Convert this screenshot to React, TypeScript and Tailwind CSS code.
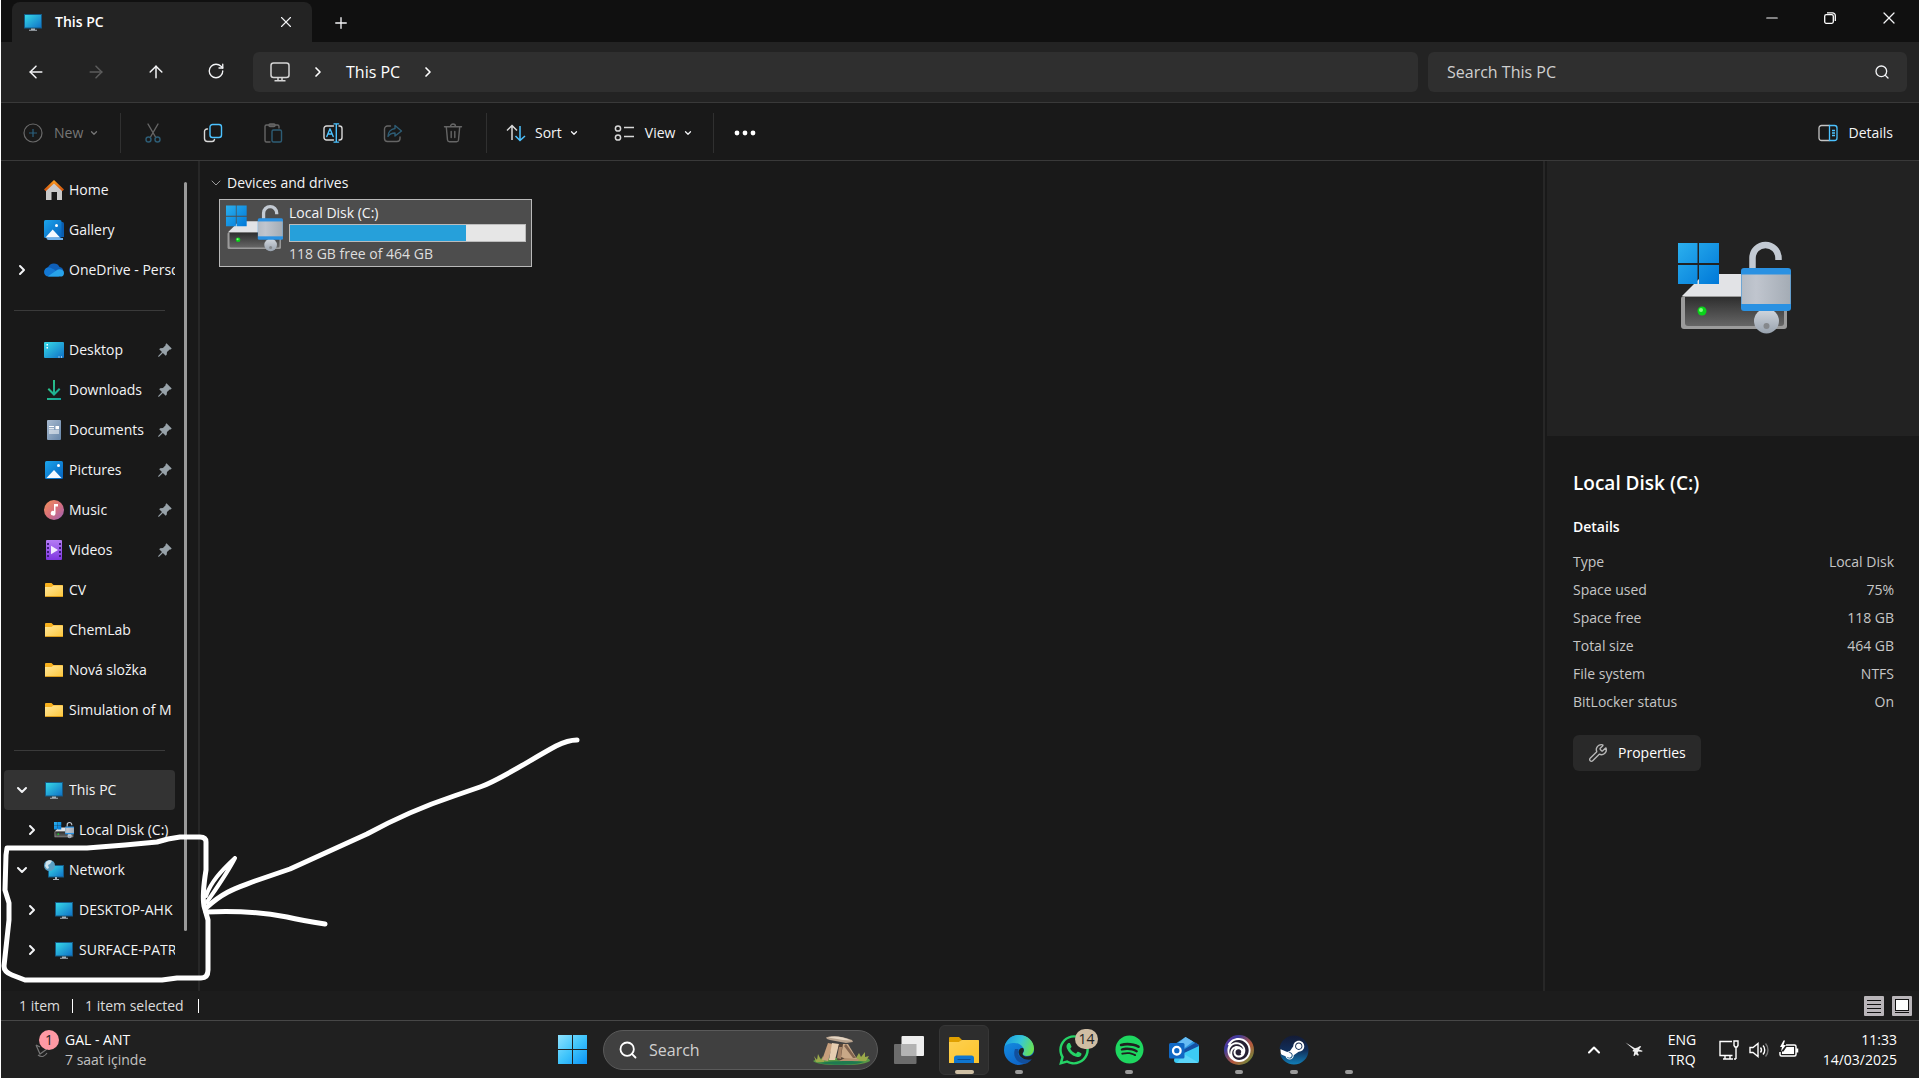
import clsx from "clsx";
import {
  ArrowLeft,
  ArrowRight,
  ArrowUp,
  ChevronDown,
  ChevronRight,
  ChevronUp,
  Minus,
  Plus,
  RotateCw,
  Search,
  Wrench,
  X,
} from "lucide-react";
import type { ReactNode } from "react";
import { FaSpotify, FaSteam, FaWhatsapp } from "react-icons/fa";
import { SiUbisoft } from "react-icons/si";

const ACCENT = "#4cc2ff";

/* Gradients shared by the icons below */
function IconDefs() {
  return (
    <svg className="absolute h-0 w-0" aria-hidden="true">
      <defs>
        <linearGradient id="screen" x1="0" y1="0" x2="1" y2="1">
          <stop offset="0" stopColor="#37dbe8" />
          <stop offset="1" stopColor="#0f6fc6" />
        </linearGradient>
        <linearGradient id="win" gradientUnits="userSpaceOnUse" x1="0" y1="2" x2="41" y2="43">
          <stop offset="0" stopColor="#2bb0ee" />
          <stop offset="1" stopColor="#0078d8" />
        </linearGradient>
        <linearGradient id="start" gradientUnits="userSpaceOnUse" x1="0" y1="0" x2="29" y2="29">
          <stop offset="0" stopColor="#8fe3ff" />
          <stop offset="0.5" stopColor="#3fc4fb" />
          <stop offset="1" stopColor="#0a93f8" />
        </linearGradient>
        <linearGradient id="front" x1="0" y1="0" x2="0" y2="1">
          <stop offset="0" stopColor="#2e2e2e" />
          <stop offset="1" stopColor="#666" />
        </linearGradient>
        <linearGradient id="metal" x1="0" y1="0" x2="1" y2="0">
          <stop offset="0" stopColor="#b4bbc4" />
          <stop offset="0.3" stopColor="#c0c5ce" />
          <stop offset="1" stopColor="#a4acb5" />
        </linearGradient>
        <linearGradient id="key" x1="0" y1="0" x2="0" y2="1">
          <stop offset="0" stopColor="#d3d8df" />
          <stop offset="1" stopColor="#98a2ae" />
        </linearGradient>
        <linearGradient id="folder" x1="0" y1="0" x2="1" y2="1">
          <stop offset="0" stopColor="#ffe79c" />
          <stop offset="1" stopColor="#fdc63a" />
        </linearGradient>
        <linearGradient id="photo" x1="0" y1="0" x2="1" y2="1">
          <stop offset="0" stopColor="#1ca5ec" />
          <stop offset="1" stopColor="#0561bd" />
        </linearGradient>
        <linearGradient id="music" x1="0" y1="0" x2="1" y2="1">
          <stop offset="0" stopColor="#f2925a" />
          <stop offset="0.5" stopColor="#d8707a" />
          <stop offset="1" stopColor="#9a5fb8" />
        </linearGradient>
        <linearGradient id="video" x1="0" y1="0" x2="0" y2="1">
          <stop offset="0" stopColor="#b47cf4" />
          <stop offset="1" stopColor="#7f35e0" />
        </linearGradient>
        <linearGradient id="roof" x1="0" y1="0" x2="0" y2="1">
          <stop offset="0" stopColor="#ffa21f" />
          <stop offset="1" stopColor="#cc4d0c" />
        </linearGradient>
        <linearGradient id="down" x1="0" y1="0" x2="1" y2="1">
          <stop offset="0" stopColor="#33c983" />
          <stop offset="1" stopColor="#12a09b" />
        </linearGradient>
        <linearGradient id="doc" x1="0" y1="0" x2="1" y2="1">
          <stop offset="0" stopColor="#a9bbd0" />
          <stop offset="1" stopColor="#6685a8" />
        </linearGradient>
        <linearGradient id="edgeTop" x1="0" y1="0.3" x2="1" y2="0.6">
          <stop offset="0" stopColor="#1b9de2" />
          <stop offset="0.5" stopColor="#36c6d8" />
          <stop offset="1" stopColor="#6be34e" />
        </linearGradient>
        <linearGradient id="edgeBody" x1="0" y1="0" x2="0.6" y2="1">
          <stop offset="0" stopColor="#1596e6" />
          <stop offset="1" stopColor="#0e62c6" />
        </linearGradient>
        <linearGradient id="ubi" x1="0" y1="0" x2="1" y2="1">
          <stop offset="0" stopColor="#8a2f8e" />
          <stop offset="0.25" stopColor="#3a3b9f" />
          <stop offset="0.6" stopColor="#b8593c" />
          <stop offset="1" stopColor="#4f9a3a" />
        </linearGradient>
        <linearGradient id="steam" x1="0" y1="0" x2="0" y2="1">
          <stop offset="0" stopColor="#141b35" />
          <stop offset="0.5" stopColor="#102d59" />
          <stop offset="1" stopColor="#127fb8" />
        </linearGradient>
      </defs>
    </svg>
  );
}

function MonitorIcon({ className = "h-5 w-5" }: { className?: string }) {
  return (
    <svg viewBox="0 0 20 20" className={className}>
      <rect x="1.5" y="2.5" width="17" height="13.5" fill="url(#screen)" stroke="#155a86" />
      <path d="M8 16.500h4v1.200h2v1.100H6v-1.100h2z" fill="#aab3ba" />
    </svg>
  );
}

function DriveIcon({ className }: { className: string }) {
  return (
    <svg viewBox="0 0 113 93" className={className}>
      <path d="M4 55 26 33H90l18 22z" fill="#e2e3e6" />
      <rect x="3" y="55" width="106" height="33" rx="3" fill="#9b9b9b" />
      <path d="M7 56h99v26a3 3 0 0 1-3 3H10a3 3 0 0 1-3-3z" fill="url(#front)" />
      <circle cx="24" cy="70" r="4.5" fill="#0ad31a" />
      <circle cx="23" cy="69" r="2" fill="#7dff7a" />
      <path d="M0 2h19.500v20H0zM21 2h20v20H21zM0 24h19.500v19H0zM21 24h20v19H21z" fill="url(#win)" />
      <path d="M74.500 28V17a13 13 0 0 1 26 0v2" fill="none" stroke="#c3cad3" strokeWidth="6.500" />
      <circle cx="88.500" cy="80" r="12.500" fill="url(#key)" />
      <circle cx="88.500" cy="85" r="3" fill="#85888c" />
      <rect x="63" y="27" width="50" height="43" rx="3" fill="#2a91e2" />
      <rect x="63.500" y="33.500" width="49" height="29.500" fill="url(#metal)" />
    </svg>
  );
}

function HomeIcon() {
  return (
    <svg viewBox="0 0 20 20" className="h-5 w-5">
      <path d="M2 9.500 10 2l8 7.500V20h-5v-8H7.500v8H2z" fill="#c9c9c9" />
      <path d="M0 9.500 10 0l10 9.500-1.700 1.700L10 3.600 1.700 11.200z" fill="url(#roof)" />
    </svg>
  );
}

function GalleryIcon() {
  return (
    <svg viewBox="0 0 20 20" className="h-5 w-5">
      <path d="M17 2h1.500A1.500 1.500 0 0 1 20 3.500V17h-3z" fill="#0a5cad" />
      <path d="M2.500 18H19v2H4.500a2 2 0 0 1-2-2z" fill="#6fb0ea" />
      <rect width="17.500" height="18" rx="1.500" fill="url(#photo)" />
      <circle cx="12.500" cy="5.500" r="1.500" fill="#fff" />
      <path d="m1.500 17.500 7.200-8 7.300 8z" fill="#f4f9ff" />
    </svg>
  );
}

function PicturesIcon() {
  return (
    <svg viewBox="0 0 20 20" className="h-5 w-5">
      <rect x="1" y="1" width="18" height="18" rx="1.500" fill="url(#photo)" />
      <circle cx="14.500" cy="5.500" r="1.500" fill="#fff" />
      <path d="m2.500 18 7.500-8 7.500 8z" fill="#f4f9ff" />
    </svg>
  );
}

function OneDriveIcon() {
  return (
    <svg viewBox="0 0 20 20" className="h-5 w-5">
      <path d="M4.500 16A4.500 4.500 0 0 1 4 7.300 6.500 6.500 0 0 1 15.600 7 4.600 4.600 0 0 1 16 16z" fill="#0f5fb8" />
      <path d="M4.500 16.500A4.500 4.500 0 0 1 4.600 7.500c3 0 5 2 7 3L15 16.500z" fill="#1378d4" />
      <path d="M4 16.300 13 10c2-1.500 7-.8 7 2.900A3.600 3.600 0 0 1 16.400 16.500H4.500z" fill="#28a3ea" />
    </svg>
  );
}

function DesktopIcon() {
  return (
    <svg viewBox="0 0 20 20" className="h-5 w-5">
      <rect y="2" width="20" height="16" rx="1" fill="url(#screen)" />
      <path d="M2.500 4h1.500v1.500H2.500zM2.500 7h1.500v1.500H2.500zM14.500 16.500h1v1h-1zM17 16.500h1v1h-1z" fill="#fff" />
    </svg>
  );
}

function DownloadsIcon() {
  return (
    <svg viewBox="0 0 20 20" className="h-5 w-5">
      <path d="M9 0h2v12l4-4 1.400 1.400L10 16 3.600 9.400 5 8l4 4zM3 18h14v2H3z" fill="url(#down)" />
    </svg>
  );
}

function DocumentsIcon() {
  return (
    <svg viewBox="0 0 20 20" className="h-5 w-5">
      <rect x="3" width="14" height="20" rx="1" fill="url(#doc)" />
      <path d="M5 6h5v1H5zM5 8.200h5v1H5zM11.500 6H15v3.200h-3.500zM5 10.400h10v1H5zM5 12.600h10v1H5z" fill="#fff" />
    </svg>
  );
}

function MusicIcon() {
  return (
    <svg viewBox="0 0 20 20" className="h-5 w-5">
      <circle cx="10" cy="10" r="10" fill="url(#music)" />
      <path d="M10 4h4v2.500h-2.500V13A2.400 2.400 0 1 1 10 11z" fill="#fff" />
    </svg>
  );
}

function VideosIcon() {
  return (
    <svg viewBox="0 0 20 20" className="h-5 w-5">
      <rect x="2" width="16" height="20" rx="1" fill="url(#video)" />
      <path
        d="M3 3h2v2H3zM3 7h2v2H3zM3 11h2v2H3zM3 15h2v2H3zM15 3h2v2h-2zM15 7h2v2h-2zM15 11h2v2h-2zM15 15h2v2h-2z"
        fill="#3f1a7d"
      />
      <path d="m7 5.800 7 4.200-7 4.200z" fill="#f3eaff" />
    </svg>
  );
}

function FolderIcon() {
  return (
    <svg viewBox="0 0 20 20" className="h-5 w-5">
      <path d="M1 4a1 1 0 0 1 1-1h5.500l2 2H18a1 1 0 0 1 1 1v3H1z" fill="#f8b01c" />
      <path d="M1 7h6.500l2-1.500H19V16a1 1 0 0 1-1 1H2a1 1 0 0 1-1-1z" fill="url(#folder)" />
      <path d="M1 16h18a1 1 0 0 1-1 1H2a1 1 0 0 1-1-1z" fill="#d99a1a" />
    </svg>
  );
}

function NetworkIcon() {
  return (
    <svg viewBox="0 0 20 20" className="h-5 w-5">
      <rect x="4.500" y="5.500" width="15" height="11.500" fill="url(#screen)" stroke="#155a86" />
      <path d="M11 17h2v2h2v1H9v-1h2z" fill="#aab3ba" />
      <circle cx="5.500" cy="5.500" r="5.500" fill="#5a9fc4" />
      <path d="M2 2c2-2 5-2 6-1L6 4 4 5 5 8 3 9 1 6z" fill="#cfe3ee" />
    </svg>
  );
}

function PinIcon() {
  return (
    <svg viewBox="0 0 14 14" className="h-3.5 w-3.5">
      <path d="m8.500.3 5.200 5.200-1 1-1-.1L9 9.100l-.3 2.700-1 1-2.800-2.800L1 13.800H.2V13L4 9.100 1.200 6.300l1-1L5 5l2.600-2.700V1.200z" fill="#98a2a9" />
    </svg>
  );
}

type Place = {
  label: string;
  icon: ReactNode;
  pinned?: boolean;
  arrow?: "right" | "down";
  child?: boolean;
  active?: boolean;
};

const GROUPS: Place[][] = [
  [
    { label: "Home", icon: <HomeIcon /> },
    { label: "Gallery", icon: <GalleryIcon /> },
    { label: "OneDrive - Perso", icon: <OneDriveIcon />, arrow: "right" },
  ],
  [
    { label: "Desktop", icon: <DesktopIcon />, pinned: true },
    { label: "Downloads", icon: <DownloadsIcon />, pinned: true },
    { label: "Documents", icon: <DocumentsIcon />, pinned: true },
    { label: "Pictures", icon: <PicturesIcon />, pinned: true },
    { label: "Music", icon: <MusicIcon />, pinned: true },
    { label: "Videos", icon: <VideosIcon />, pinned: true },
    { label: "CV", icon: <FolderIcon /> },
    { label: "ChemLab", icon: <FolderIcon /> },
    { label: "Nová složka", icon: <FolderIcon /> },
    { label: "Simulation of M", icon: <FolderIcon /> },
  ],
  [
    { label: "This PC", icon: <MonitorIcon />, arrow: "down", active: true },
    { label: "Local Disk (C:)", icon: <DriveIcon className="h-5 w-5" />, arrow: "right", child: true },
    { label: "Network", icon: <NetworkIcon />, arrow: "down" },
    { label: "DESKTOP-AHK", icon: <MonitorIcon />, arrow: "right", child: true },
    { label: "SURFACE-PATR", icon: <MonitorIcon />, arrow: "right", child: true },
  ],
];

const DETAILS = [
  ["Type", "Local Disk"],
  ["Space used", "75%"],
  ["Space free", "118 GB"],
  ["Total size", "464 GB"],
  ["File system", "NTFS"],
  ["BitLocker status", "On"],
];

function PlaceRow({ place }: { place: Place }) {
  const Arrow = place.arrow === "down" ? ChevronDown : ChevronRight;

  return (
    <li>
      <button
        type="button"
        className={clsx(
          "flex h-10 w-full items-center rounded-sm text-left whitespace-nowrap",
          place.child ? "pl-5" : "pl-2.5",
          place.active && "bg-[#333]",
        )}
      >
        <span className="flex w-[30px] shrink-0">
          {place.arrow ? <Arrow className="h-4 w-4" strokeWidth={3} /> : null}
        </span>
        <span className="shrink-0">{place.icon}</span>
        <span className="ml-[5px] flex-1 overflow-hidden">{place.label}</span>
        {place.pinned ? (
          <span className="mr-[3px]">
            <PinIcon />
          </span>
        ) : null}
      </button>
    </li>
  );
}

function Sidebar() {
  return (
    <aside className="flex w-[199px] shrink-0 border-r-2 border-[#272727]">
      <nav className="w-[174px] shrink-0 overflow-hidden pt-[9px] pl-[3px]" aria-label="Places">
        {GROUPS.map((group, index) => (
          <div key={index}>
            {index > 0 ? (
              <div className="flex h-10 items-center pr-2.5 pl-2.5">
                <hr className="w-full border-[#3a3a3a]" />
              </div>
            ) : null}
            <ul>
              {group.map((place) => (
                <PlaceRow key={place.label} place={place} />
              ))}
            </ul>
          </div>
        ))}
      </nav>
      <div className="mt-[21px] mb-[60px] ml-[9px] w-[3px] rounded-full bg-[#9a9a9a]" />
    </aside>
  );
}

function TitleBar() {
  return (
    <header className="flex h-[42px] justify-between bg-[#101010]">
      <div className="flex items-end">
        <div className="ml-[11px] flex h-10 w-[300px] items-center rounded-t-lg bg-[#232323] pl-[11px]">
          <MonitorIcon className="h-5 w-5" />
          <span className="ml-3 flex-1 text-sm font-semibold text-white">This PC</span>
          <button type="button" aria-label="Close tab" className="mr-[17px]">
            <X className="h-[18px] w-[18px]" strokeWidth={1.5} />
          </button>
        </div>
        <button type="button" aria-label="New tab" className="ml-5 flex h-[38px] items-center">
          <Plus className="h-[18px] w-[18px]" strokeWidth={1.8} />
        </button>
      </div>
      <div className="flex h-9 items-center">
        <button type="button" aria-label="Minimize" className="flex w-[58px] justify-center">
          <Minus className="h-[18px] w-[18px]" strokeWidth={1.5} />
        </button>
        <button type="button" aria-label="Restore" className="flex w-[58px] justify-center">
          <svg viewBox="0 0 12 12" className="h-3 w-3" fill="none" stroke="#fff" strokeWidth="1.3">
            <rect x="0.700" y="2.700" width="8.600" height="8.600" rx="1.500" />
            <path d="M3 .8h5.500a2.800 2.800 0 0 1 2.800 2.800V9" />
          </svg>
        </button>
        <button type="button" aria-label="Close" className="flex w-[60px] justify-center">
          <X className="h-5 w-5" strokeWidth={1.5} />
        </button>
      </div>
    </header>
  );
}

function NavBar() {
  return (
    <div className="flex h-[61px] items-center border-b border-[#393939] bg-[#232323] pr-3 pl-[5px]">
      <div className="flex text-gray-100">
        <button type="button" aria-label="Back" className="flex w-[60px] justify-center">
          <ArrowLeft className="h-5 w-5" strokeWidth={1.8} />
        </button>
        <button type="button" aria-label="Forward" disabled className="flex w-[60px] justify-center text-[#5c5c5c]">
          <ArrowRight className="h-5 w-5" strokeWidth={1.8} />
        </button>
        <button type="button" aria-label="Up" className="flex w-[60px] justify-center">
          <ArrowUp className="h-5 w-5" strokeWidth={1.8} />
        </button>
        <button type="button" aria-label="Refresh" className="flex w-[60px] justify-center">
          <RotateCw className="h-[18px] w-[18px]" strokeWidth={1.8} />
        </button>
      </div>
      <div className="ml-[7px] flex h-10 flex-1 items-center rounded-md bg-[#2f2f2f] pl-[17px] text-white">
        <svg viewBox="0 0 20 20" className="h-5 w-5" fill="none" stroke="#d6d6d6" strokeWidth="1.5">
          <rect x="1" y="1" width="18" height="14.500" rx="2.500" />
          <path d="M8 15.500V18.500M12 15.500V18.500M4.500 18.700h11" />
        </svg>
        <ChevronRight className="ml-5 h-4 w-4" strokeWidth={2.5} />
        <span className="ml-5 text-base">This PC</span>
        <ChevronRight className="ml-5 h-4 w-4" strokeWidth={2.5} />
      </div>
      <label className="ml-2.5 flex h-10 w-[479px] items-center rounded-md bg-[#2f2f2f] pr-[17px] pl-[19px]">
        <input
          type="text"
          aria-label="Search This PC"
          placeholder="Search This PC"
          className="min-w-0 flex-1 bg-transparent text-base outline-none placeholder:text-[#cfcfcf]"
        />
        <Search className="h-4 w-4" strokeWidth={2} />
      </label>
    </div>
  );
}

function ToolButton({ label, children, disabled }: { label: string; children: ReactNode; disabled?: boolean }) {
  return (
    <button type="button" aria-label={label} disabled={disabled} className="flex w-[60px] justify-center">
      <svg
        viewBox="0 0 20 20"
        className={clsx("h-5 w-5", disabled && "opacity-40")}
        fill="none"
        stroke="#d8d8d8"
        strokeWidth="1.4"
        strokeLinecap="round"
        strokeLinejoin="round"
      >
        {children}
      </svg>
    </button>
  );
}

function ToolBar() {
  return (
    <div className="flex h-[58px] items-center justify-between border-b border-[#393939] pt-0.5 pr-[26px] pl-[22px]">
      <div className="flex items-center">
        <button type="button" disabled className="flex w-[97px] items-center text-[#767676]">
          <svg viewBox="0 0 20 20" className="h-5 w-5" fill="none" stroke="#6a6a6a" strokeWidth="1.2">
            <circle cx="10" cy="10" r="9" />
            <path d="M10 6v8M6 10h8" stroke="#2b617f" />
          </svg>
          <span className="ml-[11px]">New</span>
          <ChevronDown className="ml-1.5 h-2.5 w-2.5" strokeWidth={3} />
        </button>
        <span className="h-10 w-px bg-[#303030]" />
        <div className="ml-0.5 flex">
          <ToolButton label="Cut" disabled>
            <path d="M5 1l7.500 13M15 1 7.500 14" />
            <circle cx="5.500" cy="16.500" r="2.500" stroke={ACCENT} />
            <circle cx="14.500" cy="16.500" r="2.500" stroke={ACCENT} />
          </ToolButton>
          <ToolButton label="Copy">
            <path d="M4.500 6H4a2.500 2.500 0 0 0-2.500 2.500v7A3 3 0 0 0 4.500 18.500H9a2.500 2.500 0 0 0 2.500-2" />
            <rect x="7" y="1.500" width="11.500" height="13" rx="2.500" stroke={ACCENT} />
          </ToolButton>
          <ToolButton label="Paste" disabled>
            <path d="M7 19H3.500A1.500 1.500 0 0 1 2 17.500v-14A1.500 1.500 0 0 1 3.500 2h11A1.500 1.500 0 0 1 16 3.500V5" />
            <rect x="6" y="1" width="6" height="2.500" rx="1" />
            <rect x="9" y="7" width="9.500" height="12" rx="1.500" stroke={ACCENT} />
          </ToolButton>
          <ToolButton label="Rename">
            <path d="M10.500 3H3.500a2.500 2.500 0 0 0-2.500 2.500v9A2.500 2.500 0 0 0 3.500 17h7M16 3h.5A2.500 2.500 0 0 1 19 5.500v9a2.500 2.500 0 0 1-2.500 2.500H16" />
            <path d="M3.800 13.500 7 5.800l3.200 7.700M5 11h4M13.300 1v18M11 .9h4.600M11 19.100h4.600" stroke={ACCENT} />
          </ToolButton>
          <ToolButton label="Share" disabled>
            <path d="M7.500 3H4.500A3 3 0 0 0 1.500 6v9.500a3 3 0 0 0 3 3H14a3 3 0 0 0 3-3V14" />
            <path d="M12 2.500 18.500 8 12 13v-3c-3.500 0-5.500 1-7 3.500C5 9 8 6 12 5.500z" stroke={ACCENT} />
          </ToolButton>
          <ToolButton label="Delete" disabled>
            <path d="M1.500 3.800h17M7.500 3.500a2.500 2.500 0 0 1 5 0M3.300 4l1.200 13a2 2 0 0 0 2 1.800h7a2 2 0 0 0 2-1.800l1.200-13M8.200 8.500v6M11.800 8.500v6" />
          </ToolButton>
        </div>
        <span className="ml-[3px] h-10 w-px bg-[#303030]" />
        <button type="button" className="ml-[19px] flex items-center">
          <svg viewBox="0 0 20 20" className="h-5 w-5" fill="none" stroke="#d8d8d8" strokeWidth="1.5">
            <path d="M6 17V2.500M1 7.500l5-5 5 5" />
            <path d="M14 3v14.500M9.500 13l4.500 4.500 5-4.500" stroke={ACCENT} />
          </svg>
          <span className="ml-[9px]">Sort</span>
          <ChevronDown className="ml-[7px] h-2.5 w-2.5" strokeWidth={3} />
        </button>
        <button type="button" className="ml-[35px] flex items-center">
          <svg viewBox="0 0 20 20" className="h-5 w-5" fill="none" stroke="#d8d8d8" strokeWidth="1.5">
            <circle cx="4" cy="5.500" r="2.600" />
            <circle cx="4" cy="14.500" r="2.600" />
            <path d="M10 4.500h10M10 13.500h10" />
          </svg>
          <span className="ml-[11px]">View</span>
          <ChevronDown className="ml-2 h-2.5 w-2.5" strokeWidth={3} />
        </button>
        <span className="ml-5 h-10 w-px bg-[#303030]" />
        <button type="button" aria-label="See more" className="ml-5 flex">
          <svg viewBox="0 0 22 6" className="h-1.5 w-[22px]" fill="#fff">
            <circle cx="3" cy="3" r="2.400" />
            <circle cx="11" cy="3" r="2.400" />
            <circle cx="19" cy="3" r="2.400" />
          </svg>
        </button>
      </div>
      <button type="button" className="flex items-center">
        <svg viewBox="0 0 20 20" className="h-5 w-5" fill="none" stroke="#c4c4c4" strokeWidth="1.3">
          <path d="M11.500 2.500H3.500a2.500 2.500 0 0 0-2.500 2.500v10a2.500 2.500 0 0 0 2.500 2.500h8" />
          <path d="M11.500 2.500h5A2.500 2.500 0 0 1 19 5v10a2.500 2.500 0 0 1-2.500 2.500h-5zM14 7.500h3M14 10h3M14 12.500h3" stroke={ACCENT} />
        </svg>
        <span className="ml-2.5">Details</span>
      </button>
    </div>
  );
}

function DriveList() {
  return (
    <main className="min-w-0 flex-1 pt-3 pl-2">
      <button type="button" className="flex h-5 items-center">
        <ChevronDown className="h-4 w-4 text-[#9a9a9a]" strokeWidth={1.5} />
        <span className="ml-[3px]">Devices and drives</span>
      </button>
      <button
        type="button"
        className="mt-[6px] ml-[11px] flex h-[68px] w-[313px] border border-[#b9b9b9] bg-[#4d4d4d] pt-1 pr-[5px] pl-1.5 text-left"
      >
        <DriveIcon className="h-[48px] w-[57px] shrink-0" />
        <span className="ml-1.5 flex flex-1 flex-col">
          <span className="leading-[18px]">Local Disk (C:)</span>
          <span className="mt-[2px] flex h-[18px] border border-[#bcbcbc] bg-[#e6e6e6]">
            <span className="w-3/4 bg-[#26a0da]" />
          </span>
          <span className="mt-[3px] leading-[18px] text-[#dedede]">118 GB free of 464 GB</span>
        </span>
      </button>
    </main>
  );
}

function DetailsPane() {
  return (
    <aside className="w-[376px] shrink-0 border-l-2 border-[#272727]">
      <div className="ml-0.5 flex h-[275px] justify-center bg-[#222] pt-20 pl-0.5">
        <DriveIcon className="h-[93px] w-[113px]" />
      </div>
      <div className="pt-8 pr-[25px] pl-7">
        <h2 className="text-[19px] leading-[30px] font-semibold text-white">Local Disk (C:)</h2>
        <h3 className="mt-[19px] leading-5 font-semibold text-white">Details</h3>
        <dl className="mt-[11px] text-[#c6c6c6]">
          {DETAILS.map(([name, value]) => (
            <div key={name} className="flex justify-between leading-7">
              <dt>{name}</dt>
              <dd>{value}</dd>
            </div>
          ))}
        </dl>
        <button type="button" className="mt-[19px] flex h-9 items-center rounded-md bg-[#292929] px-[15px] text-white">
          <Wrench className="h-5 w-5 text-[#b8b8b8]" strokeWidth={1.6} />
          <span className="ml-2.5">Properties</span>
        </button>
      </div>
    </aside>
  );
}

function StatusBar() {
  return (
    <footer className="flex h-[30px] items-center justify-between border-b border-[#474747] bg-[#1c1c1c] pr-[7px] pl-[18px] text-[#dcdcdc]">
      <div className="flex items-center">
        <span>1 item</span>
        <span className="ml-3 h-3.5 w-px bg-white" />
        <span className="ml-3">1 item selected</span>
        <span className="ml-3.5 h-3.5 w-px bg-white" />
      </div>
      <div className="flex gap-2">
        <button type="button" aria-label="Details view">
          <svg viewBox="0 0 20 20" className="h-5 w-5">
            <rect width="20" height="20" rx="1" fill="#b9b5b9" />
            <path d="M3 4.500h14M3 8.500h14M3 12.500h14M3 16.500h14" stroke="#111" />
          </svg>
        </button>
        <button type="button" aria-label="Large icons view">
          <svg viewBox="0 0 20 20" className="h-5 w-5">
            <rect width="20" height="20" rx="1" fill="#b9b5b9" />
            <rect x="3.500" y="3.500" width="13" height="11" fill="#fff" stroke="#111" />
            <path d="M3 16.500h14" stroke="#111" />
          </svg>
        </button>
      </div>
    </footer>
  );
}

/* Stones on grass, shown at the end of the search pill */
function DolmenArt() {
  return (
    <svg viewBox="0 0 57 30" className="h-[30px] w-[57px]">
      <path d="M0 26c5-3 12-3 20-3h30c5 0 7 1 7 3-6 4-18 4-28 4S4 30 0 26z" fill="#5a9a45" />
      <path d="M1 21l3 4 1-6 3 6 2-4 1 6H3zM43 23l3-5 2 4 4-5v5l4-1-3 5H43z" fill="#9aa94a" />
      <path d="M15 8 9 25l6 1 5-17z" fill="#c79f7d" />
      <path d="M19 8 16 25h6l4-16z" fill="#e6cdb0" />
      <path d="M26 9 24 25l10 1-4-17z" fill="#594537" />
      <path d="M30 9 28 22l8 3 8-1-9-15z" fill="#c9a887" />
      <path d="M33 9l10 14h-3L31 11z" fill="#80634e" />
      <path d="M26 12l-2 11 4 1 1-12z" fill="#a98568" />
      <path d="M13 2.500C18 0 30 1 39 5l1 2-7 1-16-3-3-1z" fill="#b9a48f" />
      <path d="M15 2.500c7-2 15-.5 23 3l-8-.5z" fill="#e4d5c3" />
      <path d="M26 26l6-3 14 1-1 2-14 2z" fill="#b3906f" />
      <path d="M5 28c10-2 35-3 46-1-8 3-30 4-46 1z" fill="#1f7a50" />
    </svg>
  );
}

function EdgeIcon() {
  return (
    <svg viewBox="0 0 30 30" className="h-[30px] w-[30px]">
      <circle cx="15" cy="15" r="15" fill="url(#edgeBody)" />
      <path d="M.5 12C2 4.500 8 0 15 0c8.500 0 15 6 15 13.500C30 18 27 21 23 21c-3 0-5-1.500-4-3 1-1.300 1-2 .8-3.500C19 11 15 8 10.500 8 6 8 2 9 .5 12z" fill="url(#edgeTop)" />
      <path d="M11 14c-3 8 3 15 10 14.700 3-.2 6-3 7.500-6-3 2-7 2-10 .8-4-1.500-5.500-5.500-4-9.500z" fill="#124f9c" />
      <path d="M19.500 13.500c.8 2 .3 3-.7 4.500-1 1.700 1 3.500 4.200 3.500 3 0 5-1 7-4l.5 3.500-2 3C24 26 15 24 14.500 17c0-3 3-5 5-3.500z" fill="#202020" />
    </svg>
  );
}

function OutlookIcon() {
  return (
    <svg viewBox="0 0 30 28" className="h-7 w-[30px]">
      <path d="M6 8 16.500 1 30 9v3L14 22H6z" fill="#2a93df" />
      <path d="M8 8 16.500 1 24 5.500 13 14z" fill="#67bdf4" />
      <path d="M14 14 27 6.500l3 3V13L15 22z" fill="#1450a3" />
      <path d="M6 20l9-3 15-7v15a2 2 0 0 1-2 2H8a3 3 0 0 1-3-3z" fill="#3ccbf4" />
      <path d="M15 18 30 27H8z" fill="#6fdcfb" opacity="0.6" />
      <rect y="7" width="15.500" height="15.500" rx="1.500" fill="#1068c4" />
      <circle cx="7.800" cy="14.700" r="3.800" fill="none" stroke="#fff" strokeWidth="2.300" />
    </svg>
  );
}

function TaskItem({ label, active, running, children }: {
  label: string;
  active?: boolean;
  running?: boolean;
  children?: ReactNode;
}) {
  return (
    <button
      type="button"
      aria-label={label}
      className={clsx(
        "flex h-[50px] w-[50px] flex-col items-center rounded-md",
        active && "border border-[#363636] bg-[#2d2d2d]",
      )}
    >
      <span className={clsx("relative flex h-[30px] items-center", active ? "mt-[9px]" : "mt-2.5")}>{children}</span>
      {active || running ? (
        <span className={clsx("mt-[5px] h-1 rounded-full", active ? "w-[19px] bg-[#cfc0a5]" : "w-2 bg-[#9b9b9b]")} />
      ) : null}
    </button>
  );
}

function Taskbar() {
  return (
    <div className="flex h-[57px] items-center bg-[#202020] text-white">
      <button type="button" className="flex flex-1 items-center pl-[34px] text-left">
        <span className="relative h-10 w-[30px]">
          <svg viewBox="0 0 30 36" className="h-9 w-[30px]">
            <path d="M1 15l4 9 7-5M3 25c4 3 7 1 9-2M1 15l4 2" fill="none" stroke="#777" strokeWidth="1.200" />
          </svg>
          <span className="absolute top-0 left-1 flex h-5 w-5 items-center justify-center rounded-full bg-[#ff99a4] text-sm text-[#222]">
            1
          </span>
        </span>
        <span className="flex flex-col">
          <span className="leading-5">GAL - ANT</span>
          <span className="leading-5 text-[#c2c2c2]">7 saat içinde</span>
        </span>
      </button>

      <div className="flex items-center gap-[5px]">
        <button type="button" aria-label="Start" className="mr-[11px]">
          <svg viewBox="0 0 29 29" className="h-[29px] w-[29px]">
            <path d="M0 0h14v14H0zM15 0h14v14H15zM0 15h14v14H0zM15 15h14v14H15z" fill="url(#start)" />
          </svg>
        </button>
        <label className="mr-px flex h-10 w-[275px] items-center rounded-full border border-[#5a5a5a] bg-[#404040] pr-[7px] pl-3.5">
          <Search className="h-5 w-5" strokeWidth={2.2} />
          <input
            type="text"
            aria-label="Search"
            placeholder="Search"
            className="ml-[11px] w-0 flex-1 bg-transparent text-base outline-none placeholder:text-[#d0d0d0]"
          />
          <DolmenArt />
        </label>
        <TaskItem label="Task view">
          <svg viewBox="0 0 30 28" className="h-7 w-[30px]">
            <rect y="8" width="22.500" height="20" rx="1" fill="#6c6c6c" />
            <rect x="7.500" width="22.500" height="20" rx="1" fill="#eee" />
            <path d="M7.500 8h15v12h-15z" fill="#b3b3b3" />
          </svg>
        </TaskItem>
        <TaskItem label="File Explorer" active>
          <svg viewBox="0 0 30 28" className="h-7 w-[30px]">
            <path d="M0 2a1 1 0 0 1 1-1h9l3 3-3 3H0z" fill="#e0a000" />
            <path d="M0 6h10l3-2h16a1 1 0 0 1 1 1v22H0z" fill="url(#folder)" />
            <path d="M0 6h10l3-2h16a1 1 0 0 1 1 1v22H0z" fill="#fcc21f" opacity="0.600" />
            <path d="M5 27v-5a2.500 2.500 0 0 1 2.500-2.500h15A2.500 2.500 0 0 1 25 22v5z" fill="#0f76cf" />
            <path d="M8.500 23.500h13" stroke="#0a4d92" />
          </svg>
        </TaskItem>
        <TaskItem label="Edge" running>
          <EdgeIcon />
        </TaskItem>
        <TaskItem label="WhatsApp">
          <FaWhatsapp className="h-[34px] w-[34px] text-[#25d366]" />
          <span className="absolute -top-1.5 left-[18px] flex h-5 w-[23px] items-center justify-center rounded-full bg-[#cfbda3] text-sm text-[#222]">
            14
          </span>
        </TaskItem>
        <TaskItem label="Spotify" running>
          <FaSpotify className="h-[29px] w-[29px] text-[#1ed760]" />
        </TaskItem>
        <TaskItem label="Outlook">
          <OutlookIcon />
        </TaskItem>
        <TaskItem label="Ubisoft Connect" running>
          <svg viewBox="0 0 30 30" className="h-[30px] w-[30px]">
            <circle cx="15" cy="15" r="15" fill="url(#ubi)" />
            <circle cx="15" cy="15" r="11" fill="#262033" />
          </svg>
          <SiUbisoft className="absolute left-[3px] h-6 w-6" />
        </TaskItem>
        <TaskItem label="Steam" running>
          <svg viewBox="0 0 30 30" className="h-[30px] w-[30px]">
            <circle cx="15" cy="15" r="13.500" fill="#fff" />
          </svg>
          <FaSteam className="absolute left-0 h-[30px] w-[30px]" style={{ fill: "url(#steam)" }} />
        </TaskItem>
        <TaskItem label="Background app" running />
      </div>

      <div className="flex flex-1 items-center justify-end pr-[22px]">
        <button type="button" aria-label="Show hidden icons">
          <ChevronUp className="h-5 w-5" strokeWidth={2.5} />
        </button>
        <svg viewBox="0 0 18 18" className="ml-[21px] h-[18px] w-[18px]" fill="#eee">
          <path d="M.5 1.500 7 5.500l3 1.700 2.500-.7L15 5l1.200.6-2.200 3 3.500 1.200-.3 1-4-.3-.6 1.200 1.300 2.300-1 .8-2-1.600L9.500 15l-1-.3.8-4-1.800-.4.600-1.500 1 .2z" />
        </svg>
        <button type="button" className="ml-[22px] w-[34px] text-center leading-5">
          ENG
          <br />
          TRQ
        </button>
        <button type="button" aria-label="Network, volume and battery" className="ml-5 flex gap-2.5">
          <svg viewBox="0 0 20 20" className="h-5 w-5" fill="none" stroke="#fff" strokeWidth="1.4">
            <path d="M13 1.500H1v14h12.500M6 15.500v3M11 15.500v3M4 19h10" />
            <path d="M15 1h4v4.500l-1 1.500h-2l-1-1.500zM17 7v12M15 19h2" />
          </svg>
          <svg viewBox="0 0 20 20" className="h-5 w-5" fill="none" stroke="#fff" strokeWidth="1.400">
            <path d="M1 7.500v5h3l5 4v-13l-5 4zM11.500 7.500c1.200 1.500 1.200 3.500 0 5M14 5.500c2.300 2.500 2.300 6.500 0 9" />
            <path d="M16.500 3.500c3.300 3.500 3.300 9.500 0 13" stroke="#777" />
          </svg>
          <svg viewBox="0 0 20 20" className="h-5 w-5">
            <path d="M7 5h8.500A1.500 1.500 0 0 1 17 6.500v8a1.500 1.500 0 0 1-1.500 1.500h-13A1.500 1.500 0 0 1 1 14.500V12M18.500 8.500v4" fill="none" stroke="#fff" strokeWidth="1.500" />
            <path d="M7.500 7H15v7H3v-2.500h1.500z" fill="#fff" />
            <path d="M4.500.5 1 7h2l-1 4.500L7 5H4.500L6 .5z" fill="#fff" />
          </svg>
        </button>
        <button type="button" className="ml-[18px] w-[80px] text-right leading-5">
          11:33
          <br />
          14/03/2025
        </button>
      </div>
    </div>
  );
}

/* Hand-drawn marker: a box round the network entries and an arrow to it */
function Scribble() {
  return (
    <svg
      viewBox="1 0 600 270"
      className="pointer-events-none absolute bottom-[78px] left-0 h-[270px] w-[600px]"
      fill="none"
      stroke="#fff"
      strokeWidth="5"
      strokeLinecap="round"
      strokeLinejoin="round"
    >
      <path d="M7 118H87L125 115 157 112 168 109 180 107H200Q206 107 206 112V140Q202 165 204 176L208 190V240Q208 248 201 248H177L162 250H25L12 245Q4 242 4 236L9 190V173L5 160 6 125z" />
      <path d="M577 10Q568 10 556 16C530 30 500 50 480 57L454 66C430 74 400 86 367 104L290 139 255 151C240 157 225 160 206 178" />
      <path d="M235 128C220 142 211 152 206 166M235 128C228 142 218 156 207 172" strokeWidth="4" />
      <path d="M206 182C240 180 265 183 287 187C300 190 312 192 325 194" />
    </svg>
  );
}

export default function App() {
  return (
    <div
      className="relative flex min-h-screen flex-col border-l border-white bg-[#191919] text-sm text-gray-100"
      style={{ fontFamily: '"Open Sans", "Noto Sans", sans-serif' }}
    >
      <IconDefs />
      <TitleBar />
      <NavBar />
      <ToolBar />
      <div className="flex flex-1">
        <Sidebar />
        <DriveList />
        <DetailsPane />
      </div>
      <StatusBar />
      <Taskbar />
      <Scribble />
    </div>
  );
}
